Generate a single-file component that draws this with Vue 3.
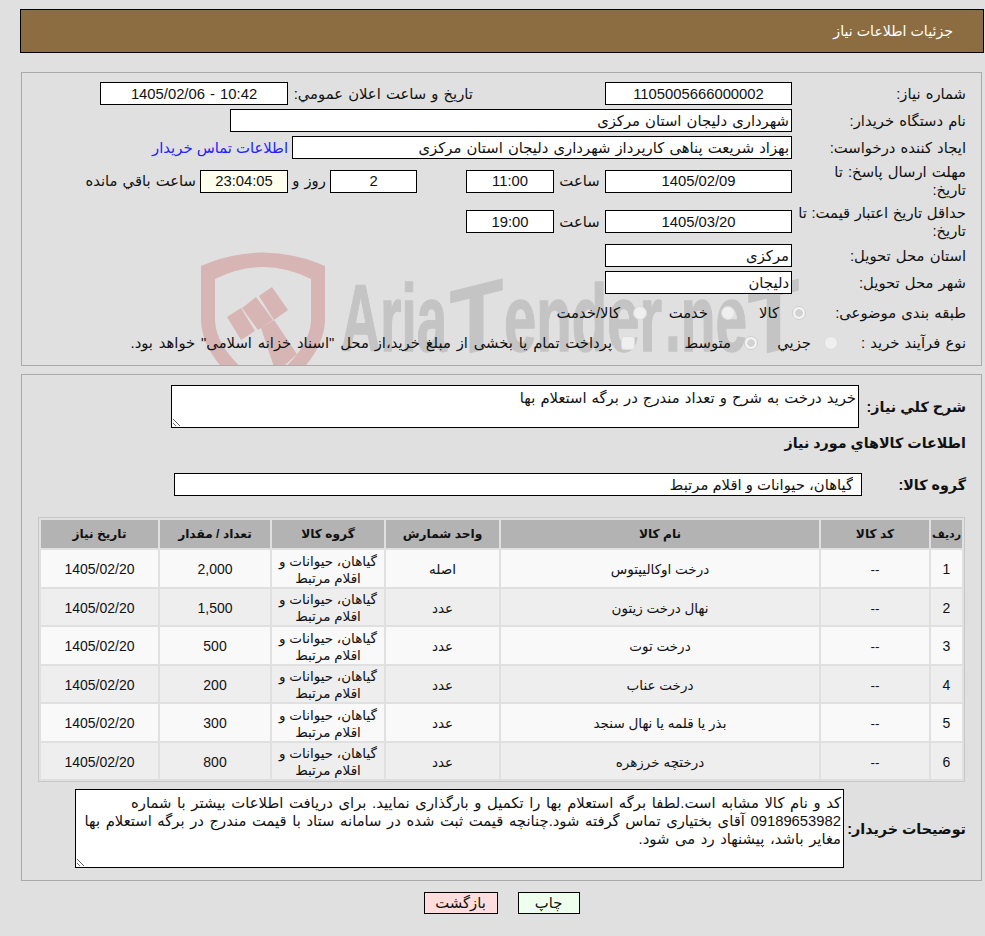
<script setup>
const rows = [
  { id: 1, name: 'درخت اوکالیپتوس', unit: 'اصله', qty: '2,000' },
  { id: 2, name: 'نهال درخت زیتون', unit: 'عدد', qty: '1,500' },
  { id: 3, name: 'درخت توت', unit: 'عدد', qty: '500' },
  { id: 4, name: 'درخت عناب', unit: 'عدد', qty: '200' },
  { id: 5, name: 'بذر یا قلمه یا نهال سنجد', unit: 'عدد', qty: '300' },
  { id: 6, name: 'درختچه خرزهره', unit: 'عدد', qty: '800' },
]
const note = 'کد و نام کالا مشابه است.لطفا برگه استعلام بها را تکمیل و بارگذاری نمایید. برای دریافت اطلاعات بیشتر با شماره\n09189653982 آقای بختیاری تماس گرفته شود.چنانچه قیمت ثبت شده در سامانه ستاد با قیمت مندرج در برگه استعلام بها\nمغایر باشد، پیشنهاد رد می شود.'
</script>

<template>
  <div class="page" dir="rtl">
    <div class="title">جزئیات اطلاعات نیاز</div>

    <section class="panel info">
      <svg class="mark" width="961" height="294" viewBox="21 72 961 294" aria-hidden="true">
        <path class="shield" fill-rule="evenodd" d="M200 265Q262 238 324 265V320Q322 362 262 400Q202 362 200 320ZM214 278V320Q216 352 262 384Q308 352 310 320V278Q262 254 214 278Z" />
        <path class="shield" d="M226 316L240 307L254 330L240 339ZM241 307L255 296L272 319L257 329ZM258 295L271 286L287 309L273 319ZM260 327L273 319L296 353L282 366H273Z" />
        <text class="mark-text" x="340" y="350" textLength="106" lengthAdjust="spacingAndGlyphs">Aria</text>
        <text class="mark-text" x="449" y="350" textLength="53" lengthAdjust="spacingAndGlyphs" transform="translate(475 0) skewY(-14) translate(-475 0)">T</text>
        <text class="mark-text" x="503" y="350" textLength="158" lengthAdjust="spacingAndGlyphs">ender</text>
        <text class="mark-text" x="664" y="350" textLength="82" lengthAdjust="spacingAndGlyphs">.ne</text>
        <text class="mark-text" x="747" y="350" textLength="51" lengthAdjust="spacingAndGlyphs" transform="translate(772 0) skewY(-14) translate(-772 0)">T</text>
      </svg>

      <div class="row">
        <label class="lbl">شماره نیاز:</label>
        <input class="field num w187" readonly value="1105005666000002" />
        <label class="announce">تاریخ و ساعت اعلان عمومي:</label>
        <input class="field num w188" readonly value="10:42 - 1405/02/06" />
      </div>
      <div class="row">
        <label class="lbl">نام دستگاه خریدار:</label>
        <input class="field left w562" readonly value="شهرداری دلیجان استان مرکزی" />
      </div>
      <div class="row">
        <label class="lbl">ایجاد کننده درخواست:</label>
        <input class="field left w500" readonly value="بهزاد شریعت پناهی کارپرداز شهرداری دلیجان استان مرکزی" />
        <a class="contact">اطلاعات تماس خریدار</a>
      </div>
      <div class="row tall">
        <label class="lbl">مهلت ارسال پاسخ: تا<br />تاریخ:</label>
        <input class="field num w187" readonly value="1405/02/09" />
        <span class="word w51">ساعت</span>
        <input class="field num w88" readonly value="11:00" />
        <input class="field num w87 days" readonly value="2" />
        <span class="word w42">روز و</span>
        <input class="field num w88 clock" readonly value="23:04:05" />
        <span class="remain">ساعت باقي مانده</span>
      </div>
      <div class="row tall second">
        <label class="lbl snug">حداقل تاریخ اعتبار قیمت: تا<br />تاریخ:</label>
        <input class="field num w187" readonly value="1405/03/20" />
        <span class="word w51">ساعت</span>
        <input class="field num w88" readonly value="19:00" />
      </div>
      <div class="row">
        <label class="lbl">استان محل تحویل:</label>
        <input class="field left w187" readonly value="مرکزی" />
      </div>
      <div class="row">
        <label class="lbl">شهر محل تحویل:</label>
        <input class="field left w187" readonly value="دلیجان" />
      </div>
      <div class="row choices">
        <label class="lbl l160">طبقه بندی موضوعی:</label>
        <label class="opt i71"><input class="radio" type="radio" checked disabled name="cat" /><span>کالا</span></label>
        <label class="opt i88"><input class="radio" type="radio" disabled name="cat" /><span>خدمت</span></label>
        <label class="opt"><input class="radio" type="radio" disabled name="cat" /><span>کالا/خدمت</span></label>
      </div>
      <div class="row choices">
        <label class="lbl l128">نوع فرآیند خرید :</label>
        <label class="opt i80"><input class="radio" type="radio" disabled name="proc" /><span>جزیي</span></label>
        <label class="opt i123"><input class="radio" type="radio" checked disabled name="proc" /><span>متوسط</span></label>
        <label class="opt tight"><input class="radio box" type="checkbox" disabled /><span class="pay">پرداخت تمام یا بخشی از مبلغ خرید،از محل "اسناد خزانه اسلامی" خواهد بود.</span></label>
      </div>
    </section>

    <section class="panel goods">
      <div class="row summary">
        <label class="strong s107">شرح کلي نیاز:</label>
        <textarea class="memo summary-box" readonly>خرید درخت به شرح و تعداد مندرج در برگه استعلام بها</textarea>
      </div>
      <h3 class="strong heading">اطلاعات کالاهاي مورد نیاز</h3>
      <div class="row group">
        <label class="strong s104">گروه کالا:</label>
        <input class="field group-box" readonly value="گیاهان، حیوانات و اقلام مرتبط" />
      </div>

      <table class="items">
        <colgroup>
          <col class="c1" /><col class="c2" /><col class="c3" /><col class="c4" /><col class="c5" /><col class="c6" /><col class="c7" />
        </colgroup>
        <thead>
          <tr>
            <th class="idx">ردیف</th><th>کد کالا</th><th>نام کالا</th><th>واحد شمارش</th><th>گروه کالا</th><th>تعداد / مقدار</th><th>تاریخ نیاز</th>
          </tr>
        </thead>
        <tbody>
          <tr v-for="r in rows" :key="r.id">
            <td class="n">{{ r.id }}</td>
            <td>--</td>
            <td>{{ r.name }}</td>
            <td>{{ r.unit }}</td>
            <td>گیاهان، حیوانات و اقلام مرتبط</td>
            <td class="n">{{ r.qty }}</td>
            <td class="n">1405/02/20</td>
          </tr>
        </tbody>
      </table>

      <div class="row notes">
        <label class="strong s122">توضیحات خریدار:</label>
        <textarea class="memo notes-box" readonly :value="note"></textarea>
      </div>
    </section>

    <div class="actions">
      <button class="btn print" type="button">چاپ</button>
      <button class="btn back" type="button">بازگشت</button>
    </div>
  </div>
</template>

<style>
html, body { background: #e0e0e0; margin: 0; }
</style>

<style scoped>
.page {
  box-sizing: border-box; width: 985px; height: 936px; padding: 9px 0 0 20px; overflow: hidden;
  font-family: "Liberation Sans", "DejaVu Sans", sans-serif; font-size: 14.8px; color: #111; line-height: 18px; word-spacing: 1px;
}
.title {
  box-sizing: border-box; height: 44px; margin-right: 1px; padding: 0 30px 0 0; background: #8c6d42; border: 1px solid #000;
  color: #fff; line-height: 42px; font-size: 14.2px; word-spacing: 0;
}
.panel { position: relative; box-sizing: border-box; width: 961px; margin-right: 3px; border: 1px solid #aaa; overflow: hidden; }
.info { height: 294px; margin-top: 19px; padding: 9px 15px 0 0; }
.goods { height: 507px; margin-top: 8px; padding: 10px 15px 0 0; }
.mark { position: absolute; left: 0; top: 0; direction: ltr; }
.shield { fill: #d8b5b5; }
.mark-text { font-family: "Liberation Sans", sans-serif; font-weight: 700; font-size: 95px; fill: #c4c4c4; stroke: #c4c4c4; stroke-width: 1.5px; stroke-linejoin: round; direction: ltr; word-spacing: 0; }

.row { position: relative; display: flex; align-items: center; height: 23px; margin-bottom: 4px; }
.tall { height: 36px; }
.second { height: 37px; }
.choices { height: 30px; margin-bottom: 0; }
.lbl { flex: none; box-sizing: border-box; width: 174px; white-space: nowrap; }
.snug { word-spacing: 0.4px; }
.l160 { width: 160px; }
.l128 { width: 128px; }

.field { flex: none; box-sizing: border-box; height: 23px; margin: 0; padding: 0 2px; border: 1px solid #000; border-radius: 0; background: #fff; font: inherit; word-spacing: inherit; color: #111; text-align: right; direction: rtl; outline: none; }
.num { text-align: center; }
.left { text-align: right; }
.w187 { width: 187px; }
.w188 { width: 188px; }
.w562 { width: 562px; }
.w500 { width: 500px; }
.w88 { width: 88px; }
.w87 { width: 87px; }
.w51 { width: 51px; }
.w42 { width: 42px; }
.announce { flex: none; box-sizing: border-box; width: 317px; padding-right: 132px; }
.contact { margin-right: 4px; color: #22f; word-spacing: 0; }
.word { flex: none; text-align: center; }
.days { margin-right: 49px; }
.clock { background: #ffffee; }
.remain { margin-right: 4px; }

.opt { display: flex; align-items: center; flex: none; gap: 13px; }
.i71 { width: 71px; }
.i88 { width: 88px; }
.i80 { width: 80px; }
.i123 { width: 123px; }
.tight { gap: 9px; }
.pay { word-spacing: 1.7px; }
.radio { appearance: none; flex: none; box-sizing: border-box; width: 14px; height: 14px; margin: 0; border: 1px solid #dcdcdc; border-radius: 50%; background: #efefef; }
.radio:checked { background: radial-gradient(circle, #d2d2d2 0 3.5px, #f4f4f4 4px); border-color: #cfcfcf; }
.box { border-radius: 3px; }

.strong { flex: none; font-size: 14.3px; font-weight: 700; box-sizing: border-box; word-spacing: 0; }
.s107 { width: 107px; }
.s104 { width: 104px; }
.s122 { width: 122px; }
.summary { height: 43px; margin-bottom: 5px; }
.heading { height: 20px; margin: 0 0 20px; line-height: 20px; }
.group { height: 23px; margin-bottom: 21px; }
.group-box { width: 688px; padding-right: 8px; word-spacing: 0; }
.memo { flex: none; box-sizing: border-box; margin: 0; padding: 3px 2px 1px; border: 1px solid #000; border-radius: 0; background: #fff; font: inherit; word-spacing: inherit; color: #111; white-space: pre-wrap; overflow: hidden; outline: none; direction: rtl; }
.summary-box { width: 688px; height: 43px; }
.notes-box { width: 769px; height: 79px; padding-top: 4px; word-spacing: 1.5px; }

.items { box-sizing: border-box; width: 927px; margin-right: 1px; border: 1px solid #c8c8c8; border-spacing: 2px; table-layout: fixed; word-spacing: 0; }
.c1 { width: 31px; }
.c2 { width: 108px; }
.c3 { width: 318px; }
.c4 { width: 113px; }
.c5 { width: 112px; }
.c6 { width: 110px; }
.c7 { width: 117px; }
.items th { height: 28px; padding: 0; background: #b3b3b3; font-size: 12.2px; font-weight: 700; text-align: center; }
.items .idx { font-size: 11px; white-space: nowrap; }
.items td { height: 36.5px; padding: 2.5px 4px 0; background: #f9f9f9; font-size: 13.5px; line-height: 17px; text-align: center; box-sizing: border-box; }
.items tbody tr:nth-child(even) td { background: #eee; }
.items .n { font-size: 14px; }

.notes { height: 79px; margin: 7px 0 0; }

.actions { display: flex; gap: 20px; justify-content: center; margin: 11px 3px 0 0; width: 961px; }
.btn { box-sizing: border-box; height: 22px; padding: 0; border: 1px solid #000; border-radius: 0; font: inherit; color: #111; line-height: 18px; }
.print { width: 62px; background: #eeffee; }
.back { width: 74px; background: #ffdddd; }
</style>
